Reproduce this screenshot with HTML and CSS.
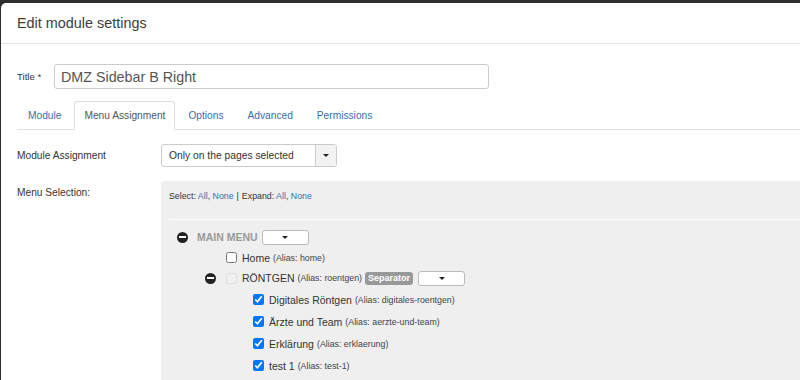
FILE: index.html
```html
<!DOCTYPE html>
<html>
<head>
<meta charset="utf-8">
<link rel="stylesheet" href="styles.css">
</head>
<body>
<div class="backdrop">
  <div class="toolbar"></div>
  <div class="modal">
    <div class="modal-header">Edit module settings</div>
    <div class="modal-body">
      <div class="title-row">
        <label class="title-label">Title *</label>
        <input class="title-input" type="text" value="DMZ Sidebar B Right">
      </div>

      <ul class="tabs">
        <li class="tab">Module</li>
        <li class="tab active">Menu Assignment</li>
        <li class="tab">Options</li>
        <li class="tab">Advanced</li>
        <li class="tab">Permissions</li>
      </ul>

      <div class="field-row assign-row">
        <div class="field-label">Module Assignment</div>
        <div class="select">
          <span class="select-text">Only on the pages selected</span>
          <span class="select-arrow"><span class="caret"></span></span>
        </div>
      </div>

      <div class="field-row menu-row">
        <div class="field-label menu-label">Menu Selection:</div>
        <div class="panel">
          <div class="panel-actions">Select: <a>All</a>, <a>None</a><span class="sep">|</span>Expand: <a>All</a>, <a>None</a></div>
          <ul class="tree">
            <li>
              <div class="row lvl1">
                <span class="toggle"></span>
                <span class="menu-title">MAIN MENU</span>
                <span class="dd"><span class="caret"></span></span>
              </div>
              <ul class="sub">
                <li>
                  <div class="row">
                    <span class="toggle blank"></span>
                    <input type="checkbox" class="cb">
                    <span class="item">Home</span><span class="alias">(Alias: home)</span>
                  </div>
                </li>
                <li>
                  <div class="row">
                    <span class="toggle"></span>
                    <input type="checkbox" class="cb" disabled>
                    <span class="item">RÖNTGEN</span><span class="alias">(Alias: roentgen)</span>
                    <span class="badge">Separator</span>
                    <span class="dd"><span class="caret"></span></span>
                  </div>
                  <ul class="sub">
                    <li><div class="row child"><span class="toggle blank"></span><input type="checkbox" class="cb" checked><span class="item">Digitales Röntgen</span><span class="alias">(Alias: digitales-roentgen)</span></div></li>
                    <li><div class="row child"><span class="toggle blank"></span><input type="checkbox" class="cb" checked><span class="item">Ärzte und Team</span><span class="alias">(Alias: aerzte-und-team)</span></div></li>
                    <li><div class="row child"><span class="toggle blank"></span><input type="checkbox" class="cb" checked><span class="item">Erklärung</span><span class="alias">(Alias: erklaerung)</span></div></li>
                    <li><div class="row child"><span class="toggle blank"></span><input type="checkbox" class="cb" checked><span class="item">test 1</span><span class="alias">(Alias: test-1)</span></div></li>
                  </ul>
                </li>
              </ul>
            </li>
          </ul>
        </div>
      </div>
    </div>
  </div>
</div>
</body>
</html>
```

FILE: styles.css
```css
* { box-sizing: border-box; }
html, body {
  margin: 0;
  padding: 0;
  width: 800px;
  height: 380px;
  overflow: hidden;
  font-family: "Liberation Sans", Arial, sans-serif;
  color: #333;
}
.backdrop {
  background: #2c2c2c;
  height: 380px;
  padding-left: 1px;
  display: flex;
  flex-direction: column;
}
.toolbar {
  height: 3px;
  flex: none;
  background: #2e2e2e;
}
.modal {
  flex: 1;
  background: #fff;
  border-radius: 5px 0 0 0;
  overflow: hidden;
}
.modal-header {
  height: 41px;
  border-bottom: 1px solid #e5e5e5;
  padding-left: 16px;
  font-size: 14.4px;
  line-height: 40px;
  color: #3c3c3c;
}
.modal-body {
  padding-left: 16px;
}
.title-row {
  display: flex;
  align-items: center;
  margin-top: 20px;
}
.title-label {
  width: 37px;
  font-size: 9.6px;
  color: #333;
}
.title-input {
  width: 435px;
  height: 25px;
  border: 1px solid #ccc;
  border-radius: 3px;
  padding: 0 6px;
  font-family: "Liberation Sans", Arial, sans-serif;
  font-size: 14.3px;
  color: #555;
  margin: 0;
  outline: none;
}
.tabs {
  list-style: none;
  margin: 12px 0 0 0;
  padding: 0;
  display: flex;
  border-bottom: 1px solid #ddd;
  height: 29px;
}
.tab {
  padding: 0 10px;
  margin-right: 2px;
  font-size: 10.2px;
  line-height: 27px;
  color: #3a6ea8;
  border: 1px solid transparent;
  border-radius: 3px 3px 0 0;
}
.tab.active {
  color: #555;
  background: #fff;
  border-color: #ddd #ddd transparent #ddd;
  height: 29px;
  padding: 0 9px;
}
.field-row {
  display: flex;
}
.field-label {
  width: 144px;
  font-size: 10.2px;
  color: #333;
  flex: none;
}
.assign-row {
  margin-top: 14px;
  align-items: center;
}
.select {
  display: flex;
  width: 176px;
  height: 23px;
  border: 1px solid #ccc;
  border-radius: 3px;
  overflow: hidden;
}
.select-text {
  flex: 1;
  font-size: 10.3px;
  line-height: 21px;
  padding-left: 7px;
  color: #333;
}
.select-arrow {
  width: 21px;
  background: #f2f2f2;
  border-left: 1px solid #ccc;
  display: flex;
  align-items: center;
  justify-content: center;
}
.caret {
  width: 0;
  height: 0;
  border-left: 3.5px solid transparent;
  border-right: 3.5px solid transparent;
  border-top: 3.5px solid #222;
}
.menu-row {
  margin-top: 14px;
}
.menu-label {
  padding-top: 6px;
}
.panel {
  flex: 1;
  background: #efefef;
  height: 220px;
  border-radius: 3px 0 0 0;
  padding: 10px 0 0 8px;
}
.panel-actions {
  font-size: 8.8px;
  line-height: 11px;
  color: #333;
  padding-bottom: 17px;
  border-bottom: 1px solid #fff;
}
.panel-actions a {
  color: #3a6ea8;
}
.panel-actions .sep {
  margin: 0 3px;
  color: #333;
}
.tree, .sub {
  list-style: none;
  margin: 0;
  padding: 0;
}
.tree {
  padding: 7px 0 0 8px;
}
.sub {
  padding-left: 28px;
}
.sub .sub {
  padding-left: 27px;
}
.row {
  display: flex;
  align-items: center;
  height: 20.5px;
  white-space: nowrap;
}
.row.child {
  height: 22px;
}
.toggle {
  width: 11px;
  height: 11px;
  border-radius: 50%;
  background: #222;
  position: relative;
  flex: none;
  margin-right: 10px;
}
.toggle::after {
  content: "";
  position: absolute;
  left: 2px;
  right: 2px;
  top: 4.5px;
  height: 2px;
  background: #fff;
}
.toggle.blank {
  background: none;
}
.toggle.blank::after {
  display: none;
}
.lvl1 .toggle {
  margin-right: 9px;
}
.menu-title {
  font-size: 10.5px;
  font-weight: bold;
  color: #999;
  margin-right: 4px;
}
.dd {
  width: 47px;
  height: 15px;
  background: #fff;
  border: 1px solid #bbb;
  border-radius: 3px;
  display: inline-flex;
  align-items: center;
  justify-content: center;
}
.cb {
  width: 11px;
  height: 11px;
  margin: 0 5px 0 0;
  flex: none;
}
.cb:disabled {
  opacity: 0.45;
}
.item {
  font-size: 10.5px;
  color: #333;
}
.alias {
  font-size: 8.8px;
  color: #444;
  margin-left: 3px;
}
.badge {
  background: #999;
  color: #fff;
  font-weight: bold;
  font-size: 9px;
  line-height: 13px;
  padding: 0 3px;
  border-radius: 3px;
  margin: 0 5px 0 3px;
}
```
